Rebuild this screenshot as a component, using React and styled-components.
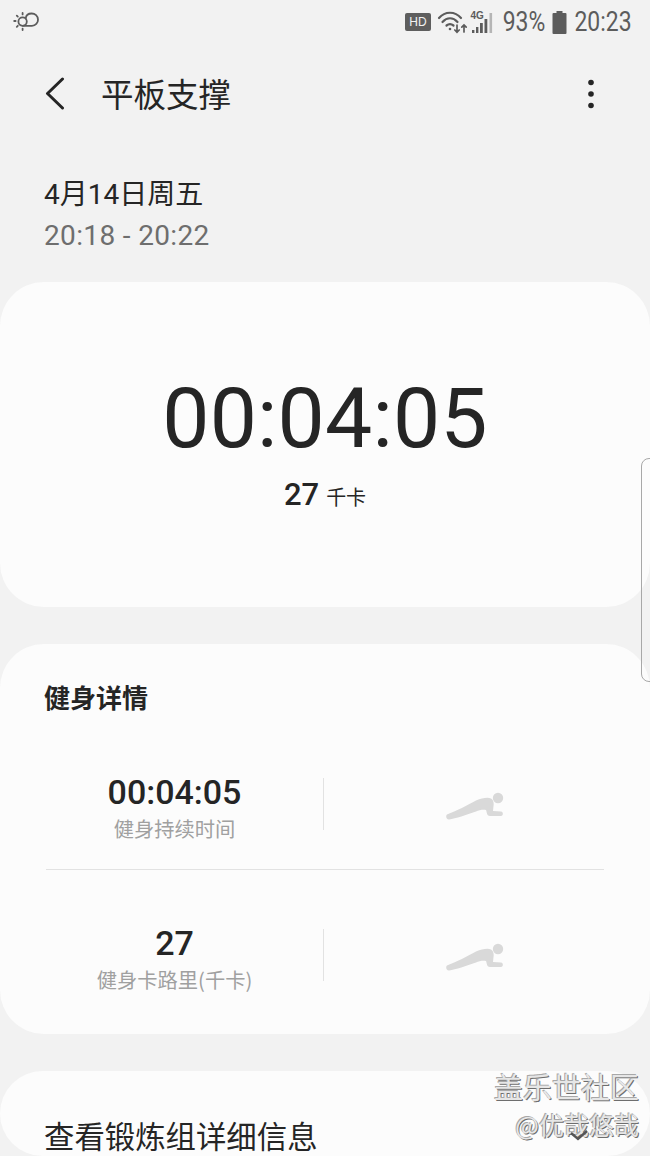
import React from "react";
import styled, { createGlobalStyle } from "styled-components";

const GlobalStyle = createGlobalStyle`
  html, body {
    margin: 0;
    padding: 0;
    background: #f2f2f2;
  }
  body {
    font-family: "Roboto", "Noto Sans CJK SC", sans-serif;
  }
`;

const Page = styled.div`
  width: 650px;
  height: 1156px;
  position: relative;
  overflow: hidden;
  background: #f2f2f2;
`;

const StatusBar = styled.div`
  height: 44px;
  display: flex;
  align-items: center;
  justify-content: space-between;
  padding: 0 17px 0 13px;
  color: #5c5c5c;
`;

const StatusRight = styled.div`
  display: flex;
  align-items: center;
`;

const HdBadge = styled.span`
  width: 26px;
  height: 18px;
  border-radius: 2px;
  background: #5e5e5e;
  color: #f2f2f2;
  font-family: "Liberation Sans", sans-serif;
  font-size: 12px;
  line-height: 18px;
  text-align: center;
  margin-right: 5px;
`;

const StatusText = styled.span`
  font-size: 27px;
  line-height: 44px;
  transform: scaleX(0.85);
  width: ${(props) => props.$width}px;
  display: flex;
  justify-content: center;
  white-space: nowrap;
`;

const Header = styled.div`
  height: 100px;
  display: flex;
  align-items: center;
  padding: 0 56px 0 44px;
`;

const HeaderTitle = styled.h1`
  margin: 0 0 4px 35px;
  flex: 1;
  font-size: 32.5px;
  font-weight: 400;
  color: #252525;
  font-family: "Noto Sans CJK SC", sans-serif;
`;

const DateBlock = styled.div`
  padding: 30px 44px 0;
  height: 138px;
  box-sizing: border-box;
`;

const DateLine = styled.div`
  font-size: 28px;
  line-height: 41px;
  letter-spacing: ${(props) => (props.$muted ? "0.35px" : "0")};
  color: ${(props) => (props.$muted ? "#6e6e6e" : "#252525")};
  font-family: "Roboto", "Noto Sans CJK SC", sans-serif;
`;

const Card = styled.section`
  background: #fcfcfc;
  border-radius: 44px;
  margin-bottom: 37px;
  box-sizing: border-box;
`;

const TimerCard = styled(Card)`
  height: 325px;
  padding-top: 87px;
  text-align: center;
`;

const BigTime = styled.div`
  font-size: 84px;
  line-height: 100px;
  color: #252525;
  letter-spacing: 0.2px;
`;

const Calories = styled.div`
  margin-top: 6px;
  display: flex;
  justify-content: center;
  align-items: baseline;
  gap: 7px;
  color: #252525;
  font-size: 31px;
  line-height: 40px;
  font-weight: 500;
`;

const CaloriesUnit = styled.span`
  font-size: 20px;
  font-weight: 400;
  font-family: "Noto Sans CJK SC", sans-serif;
`;

const DetailCard = styled(Card)`
  height: 390px;
  padding: 34px 45px 0 44px;
`;

const DetailTitle = styled.h2`
  margin: 0 0 57px;
  font-size: 26px;
  line-height: 38px;
  font-weight: 700;
  color: #252525;
  font-family: "Noto Sans CJK SC", sans-serif;
`;

const DetailRow = styled.div`
  display: grid;
  grid-template-columns: 279px 1px 1fr;
`;

const RowDivider = styled.div`
  height: 1px;
  background: #e2e2e2;
  margin: 23px 1px 54px 2px;
`;

const Metric = styled.div`
  text-align: center;
  padding-right: 18px;
`;

const MetricValue = styled.div`
  font-size: 34px;
  line-height: 38px;
  font-weight: 500;
  color: #252525;
`;

const MetricLabel = styled.div`
  font-size: 20.3px;
  line-height: 35px;
  color: #a0a0a0;
  font-family: "Noto Sans CJK SC", sans-serif;
`;

const MetricSeparator = styled.div`
  background: #e2e2e2;
  height: 52px;
  margin-top: 5px;
`;

const MetricIcon = styled.div`
  display: flex;
  justify-content: center;
  padding: 18px 0 0 22px;
`;

const LinkCard = styled(Card)`
  height: 85px;
  padding: 44px 44px 0;
  margin-bottom: 0;
`;

const LinkText = styled.div`
  font-size: 30.4px;
  line-height: 40px;
  color: #252525;
  font-family: "Noto Sans CJK SC", sans-serif;
`;

const EdgeHandle = styled.div`
  position: absolute;
  left: 641px;
  top: 458px;
  width: 20px;
  height: 224px;
  box-sizing: border-box;
  border: 1px solid #a8a8a8;
  border-radius: 8px;
`;

const Watermark = styled.div`
  position: absolute;
  right: 11px;
  top: 1067px;
  text-align: right;
  font-family: "Noto Sans CJK SC", sans-serif;
  color: #e6e6e6;
  text-shadow: -1px -1px 0 #a8a8a8, 1px 1px 0 #6e6e6e;
`;

const WatermarkTitle = styled.div`
  font-size: 29px;
  line-height: 38px;
`;

const WatermarkSub = styled.div`
  font-size: 25px;
  line-height: 38px;
`;

const WatermarkCheck = styled.svg`
  position: absolute;
  left: 75px;
  top: 62px;
`;

const PlankIcon = () => (
  <svg width="60" height="30" viewBox="0 0 60 30" fill="#d9d9d9">
    <circle cx="52" cy="7" r="5.2" />
    <path d="M1 23.5 C10 20 22 14 30 9.5 C36 7 42 6 45 7.5 C47.5 9 48 12 47.5 15 L47 20 L55 20.5 C57.5 20.5 57.5 25 55 25 L44 25 C41 25 41 22 40 19 C37 18.5 33 19 30 20.5 C20 24 10 27.5 3 28.5 C0 28.5 -0.5 24.5 1 23.5 Z" />
  </svg>
);

const WeatherIcon = () => (
  <svg width="26" height="20" viewBox="0 0 26 20" fill="none" stroke="#5c5c5c" strokeWidth="1.8" strokeLinecap="round">
    <circle cx="9.6" cy="9.6" r="4.2" />
    <path d="M10 13.8 H19 C22.5 13.8 25 11 25 7.7 C25 4 22 1.5 18.7 1.5 C15.5 1.5 13 3.5 12.7 6.5" />
    <path d="M9.6 1 v1.4 M3.8 3.6 l1 1 M1.2 9 h1.4 M3.8 14.8 l1 -1 M9.6 16.6 v1.4" />
  </svg>
);

const WifiIcon = () => (
  <svg width="32" height="24" viewBox="0 0 32 24" fill="none" stroke="#5c5c5c" strokeWidth="2.2" strokeLinecap="round" style={{ marginRight: 2 }}>
    <path d="M3 8 C9 1 19 1 25 8" />
    <path d="M6.5 12 C11 7 17 7 21.5 12" />
    <path d="M10.5 15.5 C12.5 14 15.5 14 17.5 15.5" />
    <circle cx="14" cy="19" r="1.3" fill="#5c5c5c" stroke="none" />
    <path d="M21 15 v7 M18.8 20 l2.2 2.2 l2.2 -2.2 M28 22 v-7 M25.8 17.2 l2.2 -2.2 l2.2 2.2" strokeWidth="1.7" />
  </svg>
);

const SignalIcon = () => (
  <svg width="24" height="24" viewBox="0 0 24 24" fill="#5c5c5c" style={{ marginRight: 8 }}>
    <text x="0.5" y="9" fontSize="10" fontWeight="700" fontFamily="Liberation Sans, sans-serif">4G</text>
    <rect x="2" y="20" width="2.4" height="3" />
    <rect x="6" y="17" width="2.4" height="6" />
    <rect x="10" y="13" width="2.8" height="10" />
    <rect x="14.5" y="9" width="2.8" height="14" />
    <rect x="19.5" y="3" width="2.6" height="20" fill="#b5b5b5" />
  </svg>
);

const BatteryIcon = () => (
  <svg width="15" height="23" viewBox="0 0 15 23" fill="#5c5c5c" style={{ margin: "0 6px 0 6px" }}>
    <rect x="4.5" y="0" width="6" height="2" />
    <rect x="0.5" y="2" width="14" height="21" rx="1" />
  </svg>
);

const BackIcon = () => (
  <svg width="22" height="34" viewBox="0 0 22 34" fill="none" stroke="#252525" strokeWidth="3" strokeLinecap="round" strokeLinejoin="round">
    <path d="M18.5 2 L3.5 16.5 L18.5 31" />
  </svg>
);

const MoreIcon = () => (
  <svg width="6" height="30" viewBox="0 0 6 30" fill="#252525">
    <circle cx="3" cy="3.5" r="2.8" />
    <circle cx="3" cy="15" r="2.8" />
    <circle cx="3" cy="26.5" r="2.8" />
  </svg>
);

const App = () => {
  return (
    <Page>
      <GlobalStyle />
      <StatusBar>
        <WeatherIcon />
        <StatusRight>
          <HdBadge>HD</HdBadge>
          <WifiIcon />
          <SignalIcon />
          <StatusText $width={44}>93%</StatusText>
          <BatteryIcon />
          <StatusText $width={60}>20:23</StatusText>
        </StatusRight>
      </StatusBar>
      <Header>
        <BackIcon />
        <HeaderTitle>平板支撑</HeaderTitle>
        <MoreIcon />
      </Header>
      <DateBlock>
        <DateLine>4月14日周五</DateLine>
        <DateLine $muted>20:18 - 20:22</DateLine>
      </DateBlock>
      <TimerCard>
        <BigTime>00:04:05</BigTime>
        <Calories>
          27 <CaloriesUnit>千卡</CaloriesUnit>
        </Calories>
      </TimerCard>
      <DetailCard>
        <DetailTitle>健身详情</DetailTitle>
        <DetailRow>
          <Metric>
            <MetricValue>00:04:05</MetricValue>
            <MetricLabel>健身持续时间</MetricLabel>
          </Metric>
          <MetricSeparator />
          <MetricIcon>
            <PlankIcon />
          </MetricIcon>
        </DetailRow>
        <RowDivider />
        <DetailRow>
          <Metric>
            <MetricValue>27</MetricValue>
            <MetricLabel>健身卡路里(千卡)</MetricLabel>
          </Metric>
          <MetricSeparator />
          <MetricIcon>
            <PlankIcon />
          </MetricIcon>
        </DetailRow>
      </DetailCard>
      <LinkCard>
        <LinkText>查看锻炼组详细信息</LinkText>
      </LinkCard>
      <EdgeHandle />
      <Watermark>
        <WatermarkTitle>盖乐世社区</WatermarkTitle>
        <WatermarkSub>@优哉悠哉</WatermarkSub>
        <WatermarkCheck width="20" height="12" viewBox="0 0 20 12" fill="none" stroke="#555" strokeWidth="2.4">
          <path d="M2 4 L9 10 L18 2" />
        </WatermarkCheck>
      </Watermark>
    </Page>
  );
};

export default App;
